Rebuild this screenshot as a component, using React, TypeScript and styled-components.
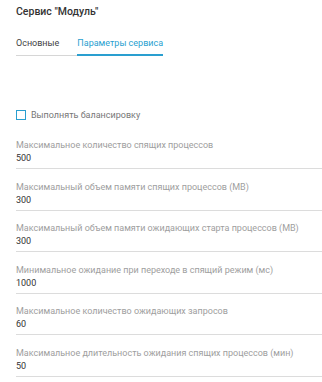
import React from 'react'
import styled, {createGlobalStyle} from 'styled-components'

const blue = '#2a9fd0';
const grayText = '#9e9e9e';

const GlobalStyle = createGlobalStyle`
  body {
    margin: 0;
    background: #fff;
    font-family: Roboto, "Noto Sans", sans-serif;
  }
`

const Page = styled.div`
  padding: 5px 0 0 16px;
  width: 306px;
  height: 377px;
  overflow: hidden;
  white-space: nowrap;
`

const Title = styled.div`
  font-size: 10.5px;
  line-height: 13px;
  font-weight: 500;
  color: #333;
`

const TabsRow = styled.div`
  display: flex;
  margin-top: 20px;
  width: fit-content;
  border-bottom: 1px solid #d6d6d6;
`

const Tab = styled.div<{ active?: boolean }>`
  font-size: 9px;
  line-height: 11px;
  padding: 0 0 5px;
  margin-right: ${({active}) => active ? '0' : '18px'};
  margin-bottom: -1px;
  color: ${({active}) => active ? blue : '#444'};
  border-bottom: 2px solid ${({active}) => active ? blue : 'transparent'};
  cursor: pointer;
`

const CheckRow = styled.label`
  display: flex;
  align-items: center;
  gap: 5px;
  margin-top: 53px;
  font-size: 9px;
  line-height: 12px;
  color: #777;
`

const Box = styled.span`
  width: 8px;
  height: 8px;
  border: 1.5px solid ${blue};
  display: inline-block;
  background: #fff;
`

const Fields = styled.div`
  margin-top: 19px;
`

const Field = styled.div`
  border-bottom: 1px solid #dcdcdc;
  padding-bottom: 4px;
  margin-bottom: 12.5px;
`

const FieldLabel = styled.div`
  font-size: 9px;
  line-height: 11px;
  color: ${grayText};
`

const FieldValue = styled.div`
  font-size: 9px;
  line-height: 11px;
  margin-top: 2px;
  color: #333;
`

const fields = [
    ['Максимальное количество спящих процессов', '500'],
    ['Максимальный объем памяти спящих процессов (MB)', '300'],
    ['Максимальный объем памяти ожидающих старта процессов (MB)', '300'],
    ['Минимальное ожидание при переходе в спящий режим (мс)', '1000'],
    ['Максимальное количество ожидающих запросов', '60'],
    ['Максимальное длительность ожидания спящих процессов (мин)', '50'],
];

function App() {
    return (
        <Page>
            <GlobalStyle/>
            <Title>Сервис "Модуль"</Title>
            <TabsRow>
                <Tab>Основные</Tab>
                <Tab active>Параметры сервиса</Tab>
            </TabsRow>
            <CheckRow>
                <Box/>
                Выполнять балансировку
            </CheckRow>
            <Fields>
                {fields.map(([label, value]) => (
                    <Field key={label}>
                        <FieldLabel>{label}</FieldLabel>
                        <FieldValue>{value}</FieldValue>
                    </Field>
                ))}
            </Fields>
        </Page>
    );
}

export default App;
